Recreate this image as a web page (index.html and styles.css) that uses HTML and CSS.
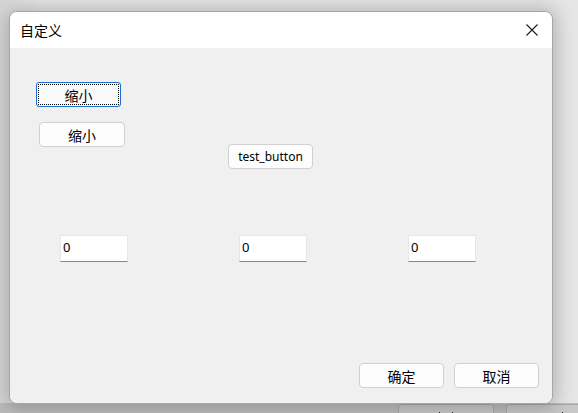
FILE: index.html
```html
<!DOCTYPE html>
<html lang="zh">
<head>
<meta charset="utf-8">
<title>自定义</title>
<link rel="stylesheet" href="styles.css">
</head>
<body>
<div class="backdrop">
  <div class="backdrop-footer">
    <div class="bg-btn"><span class="mark m1"></span><span class="mark m2"></span></div>
    <div class="bg-btn"><span class="mark m3"></span></div>
  </div>
</div>

<div class="dialog">
  <div class="titlebar">
    <span class="title">自定义</span>
    <span class="close">
      <svg width="12" height="12" viewBox="0 0 12 12"><path d="M0.5 0.5 L11.5 11.5 M11.5 0.5 L0.5 11.5" stroke="#1b1b1b" stroke-width="1.1" fill="none"/></svg>
    </span>
  </div>
  <div class="content">
    <div class="row-a">
      <button class="btn btn-focus">缩小</button>
    </div>
    <div class="row-b">
      <button class="btn btn-b2">缩小</button>
      <button class="btn btn-test">test_button</button>
    </div>
    <div class="row-inputs">
      <div class="field f1">0</div>
      <div class="field f2">0</div>
      <div class="field f3">0</div>
    </div>
    <div class="row-actions">
      <button class="btn">确定</button>
      <button class="btn">取消</button>
    </div>
  </div>
</div>
</body>
</html>
```

FILE: styles.css
```css
html, body {
  margin: 0;
  padding: 0;
}
body {
  width: 578px;
  height: 413px;
  overflow: hidden;
  background: #e4e4e4;
  position: relative;
  font-family: "Noto Sans CJK SC", "Noto Sans", sans-serif;
}
.backdrop {
  height: 413px;
  display: flex;
  flex-direction: column;
  justify-content: flex-end;
  background: linear-gradient(to right, #d6d6d6 0px, #e2e2e2 40px, #e2e2e2 540px, #e6e6e6 578px);
}
.backdrop-footer {
  height: 10px;
  background: #bcbcbc;
  display: flex;
  align-items: flex-start;
  padding-left: 398px;
  gap: 12px;
  overflow: hidden;
}
.bg-btn {
  flex: 0 0 auto;
  position: relative;
  width: 94px;
  height: 24px;
  margin-top: 1px;
  background: #c8c8c8;
  border: 1px solid #a9a9a9;
  border-radius: 3px;
}
.mark {
  position: absolute;
  top: 7px;
  width: 1px;
  height: 3px;
  background: #222;
}
.m1 { left: 40px; }
.m2 { left: 53px; }
.m3 { left: 55px; }
.dialog {
  position: absolute;
  left: 9px;
  top: 11px;
  width: 544px;
  height: 393px;
  box-sizing: border-box;
  border: 1px solid #a6a6a6;
  border-radius: 8px;
  overflow: hidden;
  display: flex;
  flex-direction: column;
  background: #f0f0f0;
  box-shadow: 0 2px 18px 3px rgba(0, 0, 0, 0.22);
}
.titlebar {
  height: 36px;
  flex: 0 0 36px;
  background: #ffffff;
  display: flex;
  align-items: center;
  justify-content: space-between;
  padding-left: 10px;
}
.title {
  font-size: 14px;
  line-height: 16px;
  color: #000;
}
.close {
  width: 40px;
  height: 36px;
  display: flex;
  align-items: center;
  justify-content: center;
}
.content {
  flex: 1;
  display: flex;
  flex-direction: column;
  background: #f0f0f0;
}
.btn {
  box-sizing: border-box;
  width: 85px;
  height: 25px;
  padding: 0;
  margin: 0;
  background: #fdfdfd;
  border: 1px solid #d0d0d0;
  border-radius: 4px;
  font-family: "Noto Sans CJK SC", "Noto Sans", sans-serif;
  font-size: 14px;
  line-height: 20px;
  color: #000;
  flex: 0 0 auto;
}
.row-a {
  display: flex;
  padding-left: 26px;
  margin-top: 34px;
}
.btn-focus {
  position: relative;
  border: 1px solid #1a6fd0;
  border-radius: 3px;
  background: #f8f9fb;
}
.btn-focus::after {
  content: "";
  position: absolute;
  left: 1px;
  top: 1px;
  right: 1px;
  bottom: 1px;
  border: 1px dotted #000;
}
.row-b {
  display: flex;
  align-items: flex-start;
  margin-top: 15px;
  padding-left: 29px;
}
.btn-b2 {
  width: 86px;
}
.btn-test {
  margin-left: 103px;
  margin-top: 22px;
  font-family: "Noto Sans", sans-serif;
  font-size: 12px;
}
.row-inputs {
  display: flex;
  margin-top: 66px;
  padding-left: 50px;
}
.field {
  box-sizing: border-box;
  width: 68px;
  height: 27px;
  background: #ffffff;
  border: 1px solid #e6e6e6;
  border-bottom: 1px solid #878787;
  font-family: "Noto Sans", sans-serif;
  font-size: 13px;
  line-height: 16px;
  padding: 3px 0 0 2px;
  color: #000;
}
.f2 { margin-left: 111px; }
.f3 { margin-left: 101px; }
.row-actions {
  margin-top: auto;
  display: flex;
  justify-content: flex-end;
  gap: 10px;
  padding-right: 13px;
  padding-bottom: 15px;
}
```
